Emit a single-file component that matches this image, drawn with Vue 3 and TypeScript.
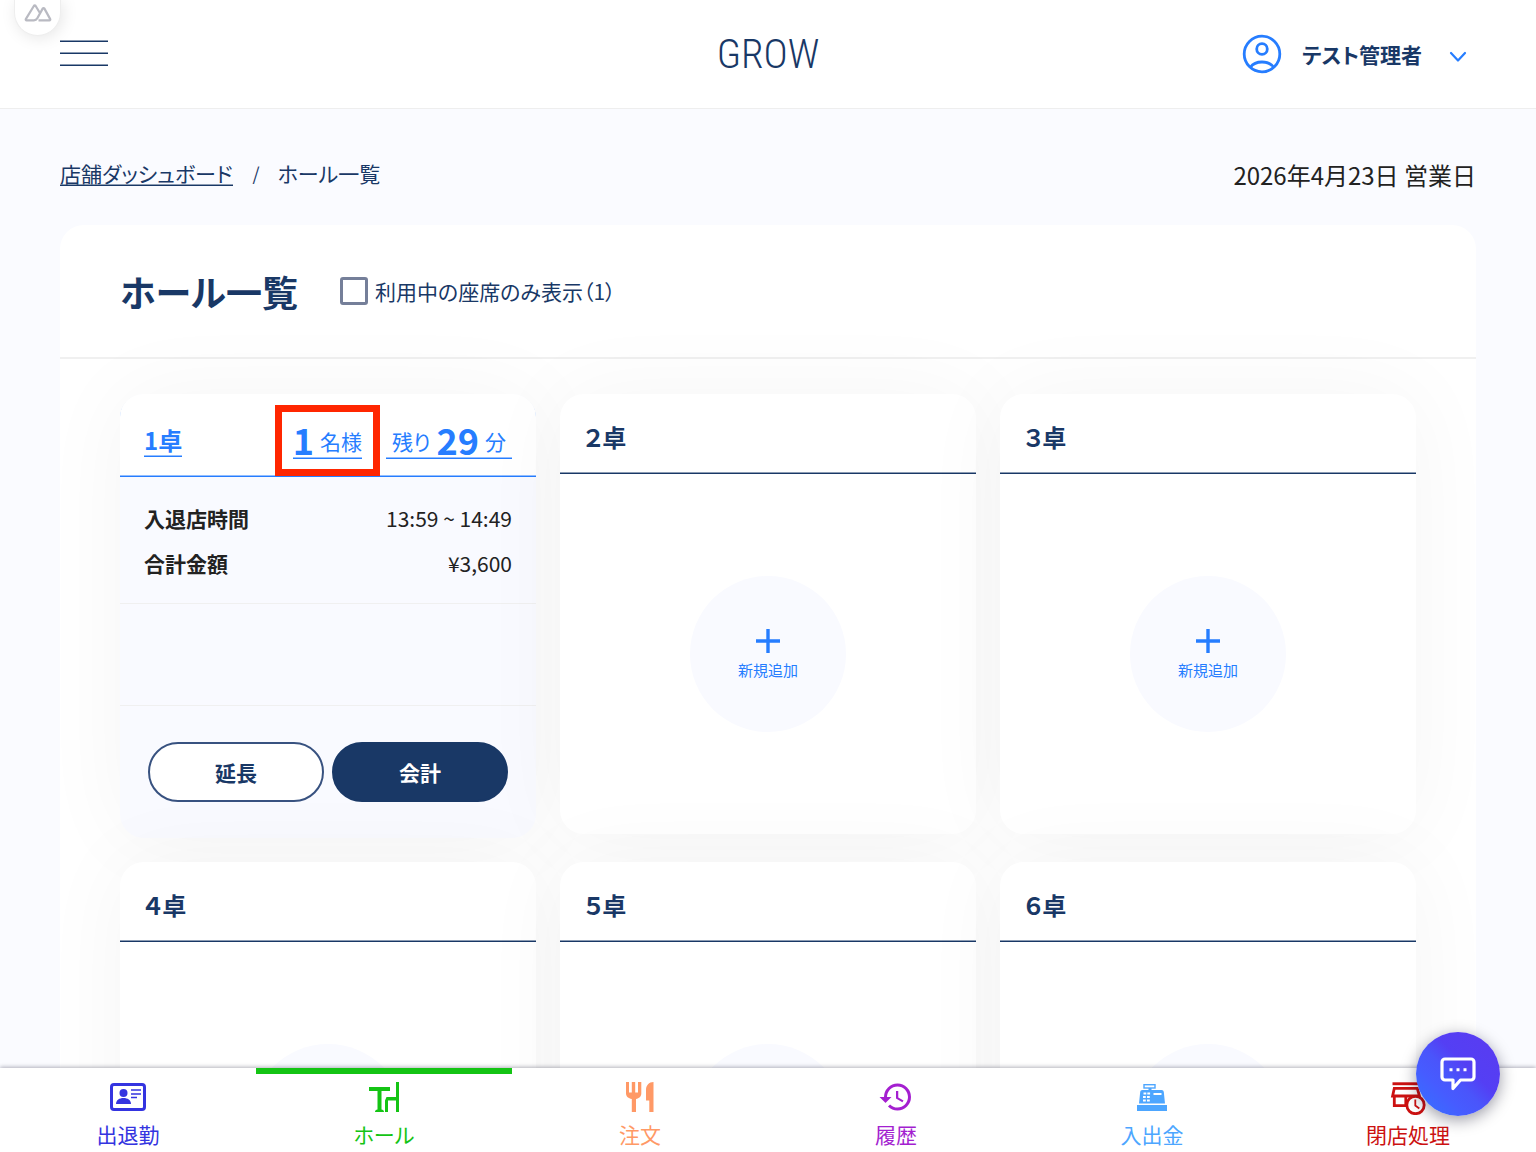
<script setup lang="ts">
import { ref } from 'vue'

interface Seat {
  id: number
  name: string
}

interface NavItem {
  key: string
  label: string
  color: string
}

const onlyInUse = ref(false)
const active = ref('hall')

const emptySeats: Seat[] = [
  { id: 2, name: '２卓' },
  { id: 3, name: '３卓' },
  { id: 4, name: '４卓' },
  { id: 5, name: '５卓' },
  { id: 6, name: '６卓' },
]

const navItems: NavItem[] = [
  { key: 'attendance', label: '出退勤', color: '#3434e0' },
  { key: 'hall', label: 'ホール', color: '#14c414' },
  { key: 'order', label: '注文', color: '#ff9966' },
  { key: 'history', label: '履歴', color: '#a41fd0' },
  { key: 'cash', label: '入出金', color: '#4da6ff' },
  { key: 'closing', label: '閉店処理', color: '#cc1111' },
]
</script>

<template>
  <div class="app">
    <header class="header">
      <div class="header-side">
        <button class="icon-button" type="button" aria-label="メニュー">
          <svg width="48" height="28" viewBox="0 0 48 28">
            <path d="M0 1.250h48M0 13.250h48M0 25.250h48" stroke="#193866" stroke-width="1.500" />
          </svg>
        </button>
      </div>
      <a class="logo" href="#">GROW</a>
      <div class="header-side header-end">
        <button class="account" type="button">
          <svg width="40" height="40" viewBox="0 0 40 40" fill="none" stroke="#267dff" stroke-width="2.800">
            <circle cx="20" cy="20" r="17.800" />
            <circle cx="20" cy="15" r="5.300" />
            <path d="M8.400 33.200C11 29.600 15.500 28 20 28s9 1.600 11.600 5.200" />
          </svg>
          <span class="account-name">テスト管理者</span>
          <svg class="chevron" width="18" height="12" viewBox="0 0 18 12" fill="none" stroke="#267dff" stroke-width="2.200" stroke-linecap="round" stroke-linejoin="round">
            <path d="M2 2l7 7.500L16 2" />
          </svg>
        </button>
      </div>
    </header>

    <main class="main">
      <div class="subhead">
        <nav class="breadcrumb" aria-label="パンくず">
          <a href="#">店舗ダッシュボード</a>
          <span class="slash">/</span>
          <span>ホール一覧</span>
        </nav>
        <p class="date">2026年4月23日 営業日</p>
      </div>

      <section class="panel">
        <div class="panel-head">
          <h1>ホール一覧</h1>
          <label class="filter">
            <input v-model="onlyInUse" type="checkbox" />
            <span>利用中の座席のみ表示（1）</span>
          </label>
        </div>

        <div class="seats">
          <article class="seat in-use">
            <div class="seat-head">
              <a class="seat-link" href="#">1卓</a>
              <div class="seat-status">
                <a class="status-link" href="#"><b>1</b><span>名様</span><i class="marker"></i></a>
                <a class="status-link remaining" href="#"><span>残り</span><b>29</b><span>分</span></a>
              </div>
            </div>
            <dl class="details">
              <div><dt>入退店時間</dt><dd>13:59 ~ 14:49</dd></div>
              <div><dt>合計金額</dt><dd>¥3,600</dd></div>
            </dl>
            <div class="memo"></div>
            <div class="actions">
              <button class="action" type="button">延長</button>
              <button class="action primary" type="button">会計</button>
            </div>
          </article>

          <article v-for="seat in emptySeats" :key="seat.id" class="seat">
            <div class="seat-head">
              <h2>{{ seat.name }}</h2>
            </div>
            <div class="seat-body">
              <button class="add" type="button">
                <svg width="26" height="26" viewBox="0 0 26 26">
                  <path d="M13 1v24M1 13h24" stroke="#267dff" stroke-width="3.400" />
                </svg>
                <span>新規追加</span>
              </button>
            </div>
          </article>
        </div>
      </section>
    </main>

    <nav class="tabbar" aria-label="メイン">
      <a
        v-for="item in navItems"
        :key="item.key"
        href="#"
        class="tab"
        :class="{ active: item.key === active }"
        :style="{ color: item.color }"
        @click.prevent="active = item.key"
      >
        <svg width="36" height="36" viewBox="0 0 36 36" fill="currentColor">
          <g v-if="item.key === 'attendance'">
            <rect x="1.500" y="5.500" width="33" height="25" rx="2.500" fill="none" stroke="currentColor" stroke-width="3" />
            <circle cx="13.500" cy="14" r="4" />
            <path d="M6 25c0-4 3.500-6 7.500-6s7.500 2 7.500 6z" />
            <path d="M21 11h10M21 15h10M21 18.500h6" stroke="currentColor" stroke-width="1.600" />
          </g>
          <g v-else-if="item.key === 'hall'">
            <path d="M3 8h21v4h-8.500v18.500c1.500.3 2.500 1 2.500 2.500H9c0-1.500 1-2.200 2.500-2.500V12H3z" />
            <path d="M30 3h3v30h-3V21.500h-8V33h-3V21.500l1.500-3.500H30z" />
          </g>
          <g v-else-if="item.key === 'order'">
            <path d="M4 3h3v10.500h2.800V3h3.400v10.500H16V3h3.300v11.500c0 3-2.300 5-5.300 5.500v13h-4.200V20C6.500 19.500 4 17.500 4 14.500z" />
            <path d="M31.500 3v30h-4.200V21.500H24V11c0-4.500 3-8 7.500-8z" />
          </g>
          <path
            v-else-if="item.key === 'history'"
            transform="scale(1.5)"
            d="M13 3a9 9 0 0 0-9 9H1l3.890 3.890.07.14L9 12H6c0-3.870 3.130-7 7-7s7 3.130 7 7-3.130 7-7 7c-1.930 0-3.680-.79-4.940-2.060l-1.420 1.420A8.954 8.954 0 0 0 13 21a9 9 0 0 0 0-18zm-1 5v5l4.280 2.540.72-1.210-3.500-2.080V8H12z"
          />
          <g v-else-if="item.key === 'cash'">
            <rect x="10" y="5.700" width="11" height="3.300" fill="none" stroke="currentColor" stroke-width="1.400" />
            <path d="M14.500 9h3v3h-3zM8.500 11h19c1.500 0 2 .7 2.300 2L31 24.500H5L6.200 13c.2-1.300.8-2 2.300-2zM3 26h30v6H3z" />
            <path d="M9.500 14.500h2.800M13.300 14.500h2.800M9 18h2.800M13 18h2.800M9 21.500h2.800M13 21.500h2.800M19.500 15h8" stroke="#fff" stroke-width="1.800" />
          </g>
          <g v-else>
            <path d="M2.500 3.300h28v2.900h-28z" />
            <g fill="none" stroke="currentColor" stroke-width="2.800">
              <path d="M4.300 9.300h23l2.200 7.700H2.600z" />
              <path d="M4.300 17v9.700h11.500V17" />
            </g>
            <circle cx="25.500" cy="26" r="8.700" fill="#fff" stroke="currentColor" stroke-width="2.800" />
            <path d="M25.300 20.500v6l4 3" fill="none" stroke="currentColor" stroke-width="1.800" />
          </g>
        </svg>
        <span>{{ item.label }}</span>
      </a>
    </nav>

    <button class="devtools" type="button" aria-label="開発ツール">
      <svg width="30" height="20" viewBox="0 0 30 20" fill="none" stroke="#b9bac2" stroke-width="2.200" stroke-linejoin="round">
        <path d="M15.500 17.300h11a.8.8 0 0 0 .7-1.200L21.300 5.400a.9.900 0 0 0-1.500 0L14.300 15.300a4 4 0 0 1-3.400 2H3.500a.8.8 0 0 1-.7-1.200L11 2.700a.9.900 0 0 1 1.500 0l4.600 7.600" />
      </svg>
    </button>

    <button class="chat" type="button" aria-label="チャット">
      <svg width="38" height="36" viewBox="0 0 38 36" fill="none" stroke="#fff" stroke-width="3.200" stroke-linejoin="round">
        <path d="M6 3h26a3 3 0 0 1 3 3v15a3 3 0 0 1-3 3H21.500L14 32.500V24H6a3 3 0 0 1-3-3V6a3 3 0 0 1 3-3z" />
        <path d="M10.500 13.800h3M17.500 13.800h3M24.500 13.800h3" stroke-width="3" />
      </svg>
    </button>
  </div>
</template>

<style>
body {
  background: #fafbff;
}
</style>

<style scoped>
.app {
  --navy: #193866;
  --navy-soft: #8c9cb3;
  --blue: #267dff;
  --blue-soft: #93beff;
  --tint: #f9faff;
  --rule: #f0f0f0;
  position: relative;
  display: flex;
  flex-direction: column;
  height: 100vh;
  overflow: hidden;
  background: #fafbff;
  color: #222;
  font-family: "Noto Sans CJK JP", "Noto Sans", sans-serif;
  font-size: 21px;
  line-height: 32px;
  font-feature-settings: "palt";
}

.app *,
.app *::before {
  box-sizing: border-box;
}

a {
  color: inherit;
  text-decoration: none;
}

button {
  padding: 0;
  border: 0;
  background: none;
  color: inherit;
  font: inherit;
  font-feature-settings: inherit;
  cursor: pointer;
}

h1,
h2,
p,
dl,
dd {
  margin: 0;
}

svg {
  display: block;
}

.header {
  display: flex;
  flex: none;
  align-items: center;
  height: 109px;
  padding: 0 60px;
  border-bottom: 1px solid #eee;
  background: #fff;
  color: var(--navy);
}

.header-side {
  display: flex;
  flex: 1;
}

.header-end {
  justify-content: flex-end;
}

.logo {
  font-family: "Roboto Condensed", "Open Sans Condensed", Roboto, sans-serif;
  font-size: 41px;
  font-weight: 300;
  line-height: 48px;
}

.account {
  display: flex;
  align-items: center;
  padding-right: 9px;
}

.account-name {
  margin: 0 27px 0 20px;
  font-weight: 700;
}

.chevron {
  margin-top: 6px;
}

.main {
  flex: 1;
  min-height: 0;
  padding: 44px 60px 0;
  overflow-y: auto;
  scrollbar-width: none;
}

.subhead {
  display: flex;
  align-items: center;
  justify-content: space-between;
  height: 44px;
}

.breadcrumb {
  display: flex;
  padding-bottom: 4px;
  color: var(--navy);
  line-height: 24px;
}

.breadcrumb a {
  border-bottom: 1px solid var(--navy);
  box-shadow: inset 0 -1px var(--navy-soft);
}

.slash {
  margin: 0 18px 0 20px;
  font-size: 18px;
}

.date {
  font-size: 24px;
}

.panel {
  margin-top: 28px;
  border-radius: 24px;
  background: #fff;
}

.panel-head {
  display: flex;
  align-items: center;
  gap: 42px;
  height: 134px;
  padding: 0 60px;
  border-bottom: 2px solid var(--rule);
  color: var(--navy);
}

h1 {
  font-size: 36px;
  font-weight: 700;
  line-height: 52px;
}

.filter {
  display: flex;
  align-items: center;
  gap: 7px;
}

.filter input {
  width: 28px;
  height: 28px;
  margin: 0;
  border: 3px solid #757f99;
  border-radius: 3px;
  background: #fff;
  appearance: none;
}

.filter input:checked {
  background: var(--blue);
}

.seats {
  display: grid;
  grid-template-columns: repeat(3, 1fr);
  align-items: start;
  gap: 24px;
  padding: 35px 60px 60px;
}

.seat {
  display: flex;
  flex-direction: column;
  min-height: 440px;
  border-radius: 24px;
  background: #fff;
  box-shadow: 0 0 90px rgba(0, 0, 0, 0.045);
}

.seat-head {
  display: flex;
  align-items: center;
  justify-content: space-between;
  height: 80px;
  padding: 6px 24px 0;
  border-bottom: 1px solid var(--navy);
  box-shadow: inset 0 -1px var(--navy-soft);
  color: var(--navy);
}

h2 {
  font-size: 24px;
  font-weight: 700;
  line-height: 36px;
}

.seat-body {
  display: flex;
  flex: 1;
  align-items: center;
  justify-content: center;
}

.add {
  display: flex;
  flex-direction: column;
  align-items: center;
  justify-content: center;
  gap: 5px;
  width: 156px;
  height: 156px;
  border-radius: 50%;
  background: var(--tint);
  color: var(--blue);
  font-size: 15px;
  line-height: 22px;
}

.in-use {
  min-height: 444px;
  background: var(--tint);
}

.in-use .seat-head {
  align-items: flex-end;
  height: 83px;
  padding-bottom: 17px;
  border-color: var(--blue);
  border-radius: 24px 24px 0 0;
  background: #fff;
  box-shadow: inset 0 -1px var(--blue-soft);
  color: var(--blue);
}

.seat-link {
  margin-bottom: 2px;
  border-bottom: 1px solid var(--blue);
  box-shadow: inset 0 -1px var(--blue-soft);
  font-size: 24px;
  font-weight: 700;
  line-height: 32px;
}

.seat-status {
  display: flex;
  gap: 24px;
}

.status-link {
  position: relative;
  display: flex;
  align-items: flex-start;
  gap: 6px;
  height: 36px;
  border-bottom: 1px solid var(--blue);
  box-shadow: inset 0 -1px var(--blue-soft);
  line-height: 36px;
}

.status-link b {
  font-size: 36px;
  font-weight: 700;
  line-height: 32px;
}

.remaining {
  padding: 0 6px;
}

.marker {
  position: absolute;
  inset: -18px;
  border: 7px solid #ff2600;
  pointer-events: none;
}

.details {
  display: flex;
  flex-direction: column;
  gap: 13px;
  padding: 25px 24px 24px;
  border-bottom: 1px solid var(--rule);
}

.details div {
  display: flex;
  justify-content: space-between;
}

dt {
  font-weight: 700;
}

.memo {
  height: 102px;
  border-bottom: 1px solid var(--rule);
}

.actions {
  display: flex;
  gap: 8px;
  padding: 36px 28px;
}

.action {
  flex: 1;
  height: 60px;
  border: 2px solid #385280;
  border-radius: 30px;
  background: #fff;
  color: var(--navy);
  font-weight: 700;
}

.action.primary {
  border-color: var(--navy);
  background: var(--navy);
  color: #fff;
}

.tabbar {
  position: relative;
  display: grid;
  flex: none;
  grid-template-columns: repeat(6, 1fr);
  height: 84px;
  background: #fff;
  box-shadow: 0 -1px 4px rgba(0, 0, 30, 0.3);
}

.tab {
  display: flex;
  flex-direction: column;
  align-items: center;
  gap: 3px;
  padding-top: 5px;
  border-top: 6px solid transparent;
}

.tab.active {
  border-top-color: currentColor;
}

.devtools {
  position: absolute;
  top: 0;
  left: 14px;
  display: flex;
  justify-content: center;
  width: 47px;
  height: 36px;
  padding-top: 3px;
  border: 1px solid #eee;
  border-top: 0;
  border-radius: 0 0 24px 24px;
  background: #fff;
  box-shadow: 2px 2px 16px rgba(0, 0, 0, 0.1);
}

.chat {
  position: absolute;
  right: 36px;
  bottom: 36px;
  display: flex;
  align-items: center;
  justify-content: center;
  width: 84px;
  height: 84px;
  border-radius: 50%;
  background: linear-gradient(45deg, #3374ff, #465cff 30%, #4a55fb 45%, #543ff4 60%, #5a3bf0);
  box-shadow: 0 4px 16px rgba(0, 0, 30, 0.4);
}
</style>
